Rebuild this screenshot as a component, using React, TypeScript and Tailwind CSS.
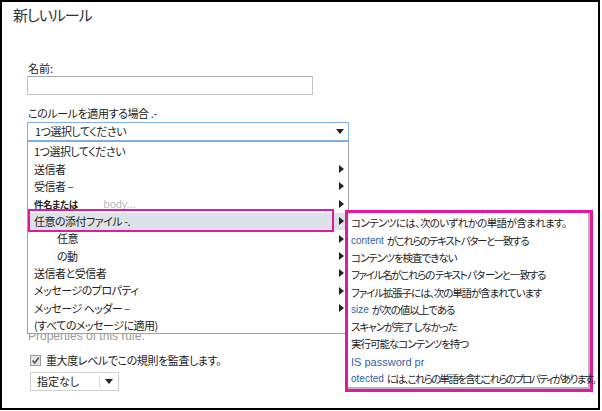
import React from "react";

const jp = "[font-family:'Noto_Sans_CJK_JP','Noto_Sans',sans-serif] [font-feature-settings:'palt']";

const Arrow = () => (
  <svg width="5" height="8" viewBox="0 0 5 8" className="shrink-0">
    <polygon points="0,0 5,4 0,8" fill="#222" />
  </svg>
);

const Caret = () => (
  <svg width="8" height="5" viewBox="0 0 8 5">
    <polygon points="0,0 8,0 4,5" fill="#222" />
  </svg>
);

const listItems: { label: React.ReactNode; arrow: boolean; indent?: boolean; active?: boolean }[] = [
  { label: "1つ選択してください", arrow: false },
  { label: "送信者", arrow: true },
  { label: "受信者 –", arrow: true },
  {
    label: (
      <>
        <span className="text-[9.5px] font-bold">件名または</span>
        <span className="ml-[26px] text-[#b8bcc2] [font-family:'Liberation_Sans',sans-serif] text-[11px] tracking-normal">body...</span>
      </>
    ),
    arrow: true,
  },
  { label: "任意の添付ファイル -.", arrow: true, active: true },
  { label: "任意", arrow: true, indent: true },
  { label: "の動", arrow: true, indent: true },
  { label: "送信者と受信者", arrow: true },
  { label: "メッセージのプロパティ", arrow: true },
  { label: "メッセージ ヘッダー –", arrow: true },
  { label: "(すべてのメッセージに適用)", arrow: false },
];

const blue = "text-[#2f5fae] [font-family:'Liberation_Sans',sans-serif] text-[10px] tracking-normal mr-[3px]";

const subItems: { node: React.ReactNode; track: string }[] = [
  { node: "コンテンツには、次のいずれかの単語が含まれます。", track: "tracking-[-0.6px]" },
  {
    node: (
      <>
        <span className={blue}>content</span>がこれらのテキスト パターと一致する
      </>
    ),
    track: "tracking-[-1.4px]",
  },
  { node: "コンテンツを検査できない", track: "tracking-[-1px]" },
  { node: "ファイル名がこれらの テキスト パタ ーンと一 致する", track: "tracking-[-1.3px]" },
  { node: "ファイル拡張子には、次の単語が含まれています", track: "tracking-[-1.1px]" },
  {
    node: (
      <>
        <span className={blue}>size</span>が次の値以上である
      </>
    ),
    track: "tracking-[-1px]",
  },
  { node: "スキャンが完了 しなかった", track: "tracking-[-1px]" },
  { node: "実行可能なコンテンツを持つ", track: "tracking-[-1px]" },
  {
    node: <span className="text-[#2f5fae] [font-family:'Liberation_Sans',sans-serif] text-[11px] tracking-normal">IS password pr</span>,
    track: "",
  },
  {
    node: (
      <>
        <span className={blue}>otected</span>には、これらの単語を含むこれらのプロパティがあります。
      </>
    ),
    track: "tracking-[-1.7px]",
  },
];

export default function App() {
  return (
    <div className="w-[602px] h-[411px] bg-white">
      <div className={`relative w-[600px] h-[410px] border-2 border-black bg-white text-[#222] ${jp}`}>
        <div className="pl-[11px] pt-[3px] text-[15px] leading-[20px] tracking-[-1px] text-[#333]">新しいルール</div>

        <div className="pl-[25px]">
          <div className="mt-[36px] text-[11px] leading-[14px] pl-[1px]">名前:</div>
          <div className="mt-[1px] w-[286px] h-[19px] border border-[#c4c4c4] border-t-[#a9a9a9] bg-white" />

          <div className="mt-[11px] text-[11px] leading-[14px] pl-[1px] tracking-[-0.4px]">このルールを適用する場合 .-</div>
          <div className="mt-[2px] w-[322px] h-[19px] border border-[#7fb0e6] flex items-center justify-between pl-[7px] pr-[4px] text-[11px] tracking-[-0.5px]">
            <span>1つ選択してください</span>
            <Caret />
          </div>

          <div className="mt-[188px] pl-[1px] text-[12px] leading-[14px] text-[#9a9a9a] [font-family:'Liberation_Sans',sans-serif]">
            Properties of this rule.
          </div>

          <div className="mt-[10px] flex items-center gap-[5px] pl-[3px] h-[14px]">
            <div className="w-[11px] h-[11px] border border-[#9a9a9a] bg-[#e6e6e6] flex items-center justify-center">
              <svg width="9" height="9" viewBox="0 0 9 9">
                <path d="M1.5 4.5 L3.7 7 L7.8 1.5" stroke="#555" strokeWidth="1.6" fill="none" />
              </svg>
            </div>
            <span className="text-[11px] leading-[14px] tracking-[-0.4px]">重大度レベルでこの規則を監査します。</span>
          </div>

          <div className="mt-[5px] ml-[3px] w-[89px] h-[19px] border border-[#d0d0d0] flex items-center text-[11px]">
            <span className="pl-[6px] w-[68px]">指定なし</span>
            <div className="w-px h-[11px] bg-[#d8d8d8]" />
            <div className="flex-1 flex justify-center">
              <Caret />
            </div>
          </div>
        </div>

        {/* dropdown list */}
        <div className="absolute left-[25px] top-[139px] w-[322px] h-[193px] border border-[#a3a3a3] bg-white pt-[1px] text-[11px] tracking-[-0.5px]">
          {listItems.map((it, i) => (
            <div
              key={i}
              className={`h-[17.4px] flex items-center justify-between pr-[4px] ${it.indent ? "pl-[29px]" : "pl-[6px]"} ${it.active ? "bg-[#dde2e8]" : ""}`}
            >
              <span className="leading-none whitespace-nowrap">{it.label}</span>
              {it.arrow && <Arrow />}
            </div>
          ))}
        </div>

        {/* highlight annotation */}
        <div className="absolute left-[26px] top-[207px] w-[306px] h-[23px] border-2 border-[#e5179b]" />

        {/* submenu */}
        <div className="absolute left-[343px] top-[208px] w-[248px] h-[182px] border-[3px] border-[#e5179b]">
          <div className="w-full h-full bg-white border-r-2 border-b-2 border-[#b5b5b5] pt-[2px] pl-[3px] text-[10.5px]">
            {subItems.map((s, i) => (
              <div key={i} className={`h-[17.3px] flex items-center whitespace-nowrap leading-none ${s.track}`}>
                {s.node}
              </div>
            ))}
          </div>
        </div>
      </div>
    </div>
  );
}
